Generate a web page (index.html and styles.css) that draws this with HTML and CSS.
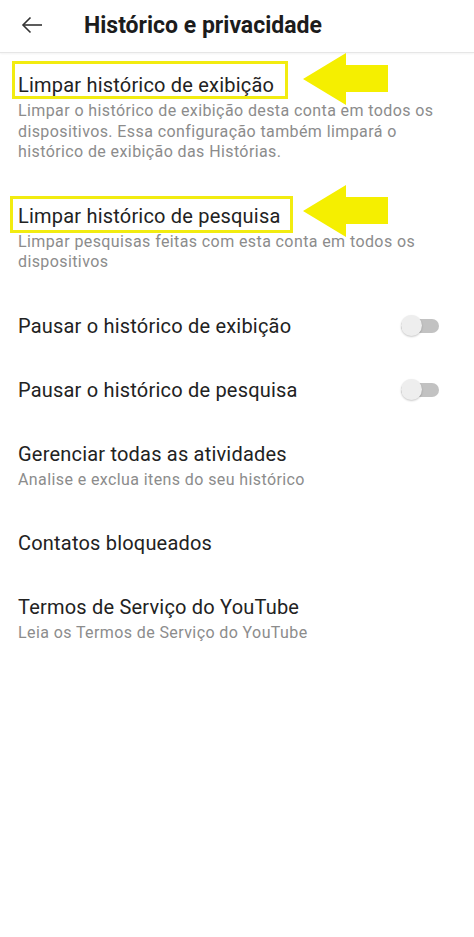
FILE: index.html
```html
<!DOCTYPE html>
<html lang="pt-BR">
<head>
  <meta charset="UTF-8" />
  <meta name="viewport" content="width=device-width, initial-scale=1.0"/>
  <title>Histórico e privacidade</title>
  <link rel="stylesheet" href="styles.css">
</head>
<body>
  <header class="topbar">
    <svg class="back" width="22" height="22" viewBox="0 0 22 22" aria-hidden="true">
      <line x1="2" y1="11" x2="21" y2="11" />
      <polyline points="9.5,3.5 2,11 9.5,18.5" />
    </svg>
    <h1>Histórico e privacidade</h1>
  </header>

  <ul class="settings">
    <li class="item">
      <div class="text">
        <div class="title">Limpar histórico de exibição</div>
        <div class="sub">Limpar o histórico de exibição desta conta em todos os dispositivos. Essa configuração também limpará o histórico de exibição das Histórias.</div>
      </div>
      <span class="mark mark-1"></span>
      <svg class="pointer" width="90" height="54" viewBox="0 0 90 54" aria-hidden="true">
        <polygon points="3,26 46,0 46,12 88,12 88,39 46,39 46,52" />
      </svg>
    </li>
    <li class="item">
      <div class="text">
        <div class="title">Limpar histórico de pesquisa</div>
        <div class="sub">Limpar pesquisas feitas com esta conta em todos os dispositivos</div>
      </div>
      <span class="mark mark-2"></span>
      <svg class="pointer pointer-2" width="90" height="54" viewBox="0 0 90 54" aria-hidden="true">
        <polygon points="3,26 46,0 46,12 88,12 88,39 46,39 46,52" />
      </svg>
    </li>
    <li class="item">
      <div class="text">
        <div class="title">Pausar o histórico de exibição</div>
      </div>
      <span class="switch"><span class="knob"></span></span>
    </li>
    <li class="item">
      <div class="text">
        <div class="title">Pausar o histórico de pesquisa</div>
      </div>
      <span class="switch"><span class="knob"></span></span>
    </li>
    <li class="item">
      <div class="text">
        <div class="title">Gerenciar todas as atividades</div>
        <div class="sub">Analise e exclua itens do seu histórico</div>
      </div>
    </li>
    <li class="item">
      <div class="text">
        <div class="title">Contatos bloqueados</div>
      </div>
    </li>
    <li class="item">
      <div class="text">
        <div class="title">Termos de Serviço do YouTube</div>
        <div class="sub">Leia os Termos de Serviço do YouTube</div>
      </div>
    </li>
  </ul>
</body>
</html>
```

FILE: styles.css
```css
body {
  margin: 0;
  font-family: Roboto, "Noto Sans", sans-serif;
  background-color: #fff;
  color: #222;
}
.topbar {
  display: flex;
  align-items: center;
  height: 52px;
  padding-left: 21px;
  border-bottom: 1px solid #e6e6e6;
  box-shadow: 0 1px 2px rgba(0,0,0,0.05);
}
.back {
  margin-bottom: 3px;
  fill: none;
  stroke: #333;
  stroke-width: 1.6;
}
.topbar h1 {
  margin: 0 0 0 41px;
  font-size: 23px;
  font-weight: 700;
  line-height: 28px;
  color: #1c1c1c;
}
.settings {
  list-style: none;
  margin: 0;
  padding: 0;
}
.item {
  position: relative;
  display: flex;
  align-items: center;
  padding: 19px 35px 19px 18px;
}
.text {
  flex: 1;
}
.title {
  font-size: 20px;
  line-height: 26px;
  letter-spacing: 0.2px;
  color: #222;
}
.sub {
  margin: 3px 0 2px;
  font-size: 16px;
  line-height: 20.5px;
  letter-spacing: 0.4px;
  color: #8c8c8c;
}
.switch {
  display: flex;
  align-items: center;
  width: 38px;
  height: 14px;
  border-radius: 7px;
  background-color: #c2c2c2;
}
.knob {
  flex-shrink: 0;
  width: 21px;
  height: 21px;
  border-radius: 50%;
  background-color: #eeeeee;
  box-shadow: 0 1px 2px rgba(0,0,0,0.22);
}

/* annotations */
.mark {
  position: absolute;
  border: 3px solid #f2ec10;
  box-sizing: border-box;
}
.mark-1 {
  left: 12px;
  top: 8px;
  width: 276px;
  height: 38px;
}
.mark-2 {
  left: 10px;
  top: 12px;
  width: 283px;
  height: 37px;
}
.pointer {
  position: absolute;
  left: 300px;
  top: 0;
  fill: #f5ef00;
}
.pointer-2 {
  top: 1px;
}
```
